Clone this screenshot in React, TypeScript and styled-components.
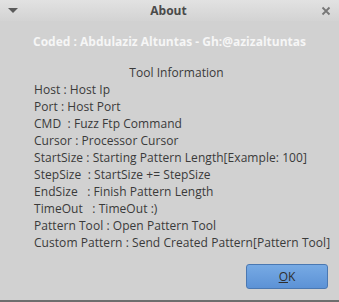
import React from 'react';
import styled, { createGlobalStyle } from 'styled-components';

const GlobalStyle = createGlobalStyle`
    html, body {
        margin: 0;
        padding: 0;
        background: #d1d1d1;
    }
    body {
        font-family: "Open Sans", "Noto Sans", sans-serif;
    }
`;

const lines = [
    'Host : Host Ip',
    'Port : Host Port',
    'CMD  : Fuzz Ftp Command',
    'Cursor : Processor Cursor',
    'StartSize : Starting Pattern Length[Example: 100]',
    'StepSize  : StartSize += StepSize',
    'EndSize   : Finish Pattern Length',
    'TimeOut   : TimeOut :)',
    'Pattern Tool : Open Pattern Tool',
    'Custom Pattern : Send Created Pattern[Pattern Tool]',
];

const App: React.FC = () => {
    return (
        <Window>
            <GlobalStyle />
            <TitleBar>
                <MenuArrow />
                <Title>About</Title>
                <CloseButton>
                    <svg width="10" height="10" viewBox="0 0 10 10">
                        <path d="M1.5 1.5 L8.5 8.5 M8.5 1.5 L1.5 8.5" stroke="#777777" strokeWidth="1.8" />
                    </svg>
                </CloseButton>
            </TitleBar>
            <Body>
                <Credit>Coded : Abdulaziz Altuntas - Gh:@azizaltuntas</Credit>
                <Info>
                    <InfoTitle>Tool Information</InfoTitle>
                    {lines.map((line) => (
                        <InfoLine key={line}>{line}</InfoLine>
                    ))}
                </Info>
                <Footer>
                    <OkButton>
                        <u>O</u>K
                    </OkButton>
                </Footer>
            </Body>
        </Window>
    );
};

const Window = styled.div`
    display: flex;
    flex-direction: column;
    width: 339px;
    height: 302px;
    box-sizing: border-box;
    border-bottom: 2px solid #6e6e6e;
    background: #d1d1d1;
    overflow: hidden;
`;

const TitleBar = styled.div`
    display: flex;
    align-items: center;
    height: 21px;
    padding: 0 6px 0 8px;
    background: linear-gradient(#e2e2e2, #d3d3d3);
`;

const MenuArrow = styled.div`
    width: 0;
    height: 0;
    border-left: 5px solid transparent;
    border-right: 5px solid transparent;
    border-top: 5px solid #5a5a5a;
    margin-top: -1px;
`;

const Title = styled.div`
    flex: 1;
    text-align: center;
    font-size: 12px;
    font-weight: bold;
    color: #4a4a4a;
`;

const CloseButton = styled.div`
    display: flex;
    width: 14px;
    justify-content: center;
`;

const Body = styled.div`
    display: flex;
    flex-direction: column;
    flex: 1;
    color: #3a3a3a;
    font-size: 12px;
`;

const Credit = styled.div`
    margin-top: 12px;
    text-align: center;
    font-weight: bold;
    color: #f6f6f6;
    line-height: 17px;
`;

const Info = styled.div`
    display: flex;
    flex-direction: column;
    margin-top: 14px;
    padding: 0 20px 0 34px;
    letter-spacing: 0.05px;
`;

const InfoTitle = styled.div`
    text-align: center;
    line-height: 17px;
`;

const InfoLine = styled.div`
    white-space: pre;
    line-height: 17px;
`;

const Footer = styled.div`
    display: flex;
    justify-content: flex-end;
    margin-top: auto;
    padding: 0 11px 11px 0;
`;

const OkButton = styled.button`
    width: 82px;
    height: 25px;
    font-family: inherit;
    font-size: 12px;
    color: #2e2e2e;
    background: linear-gradient(#77aae4, #5c92d6);
    border: 1px solid #4a78b2;
    border-radius: 3px;
    padding: 0;
    u {
        text-decoration-thickness: 1px;
    }
`;

export default App;
